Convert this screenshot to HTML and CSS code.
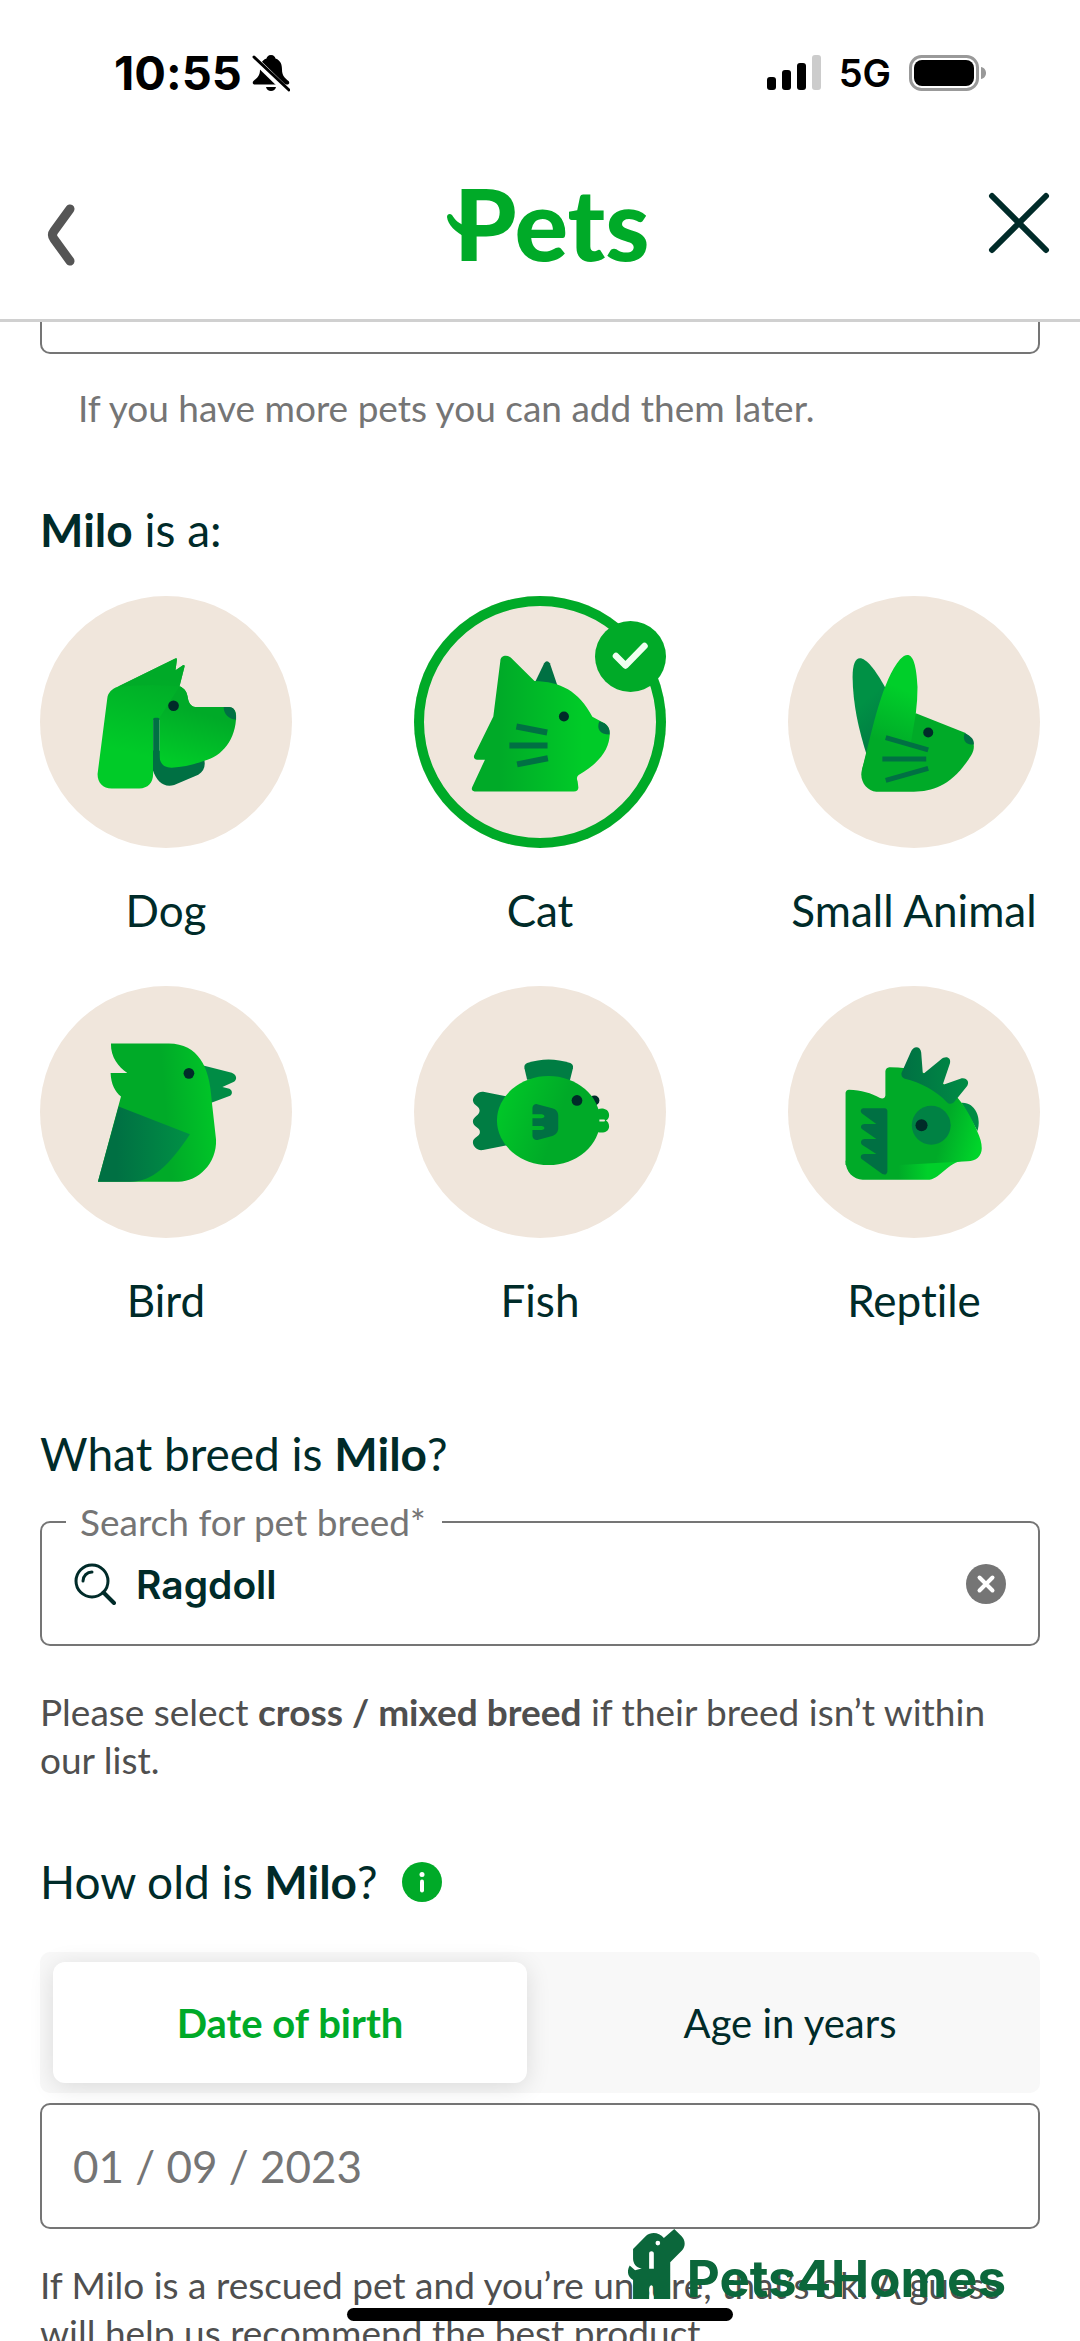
FILE: index.html
```html
<!DOCTYPE html>
<html lang="en">
<head>
<meta charset="utf-8">
<meta name="viewport" content="width=device-width, initial-scale=1">
<title>Pets – tell us about Milo</title>
<link rel="stylesheet" href="styles.css">
</head>
<body>
<div class="app">
  <div class="status">
    <div class="status-group">
      <span class="clock">10:55</span>
      <svg class="bell" viewBox="0 0 38 38" aria-hidden="true">
        <path d="M19 1c-3 0-4 2-4.500 3.500C9 6.500 8 11 8 15.500 8 22 5 24 1.500 27c-1.500 1.600-.7 3.500 1.500 3.500h32c2.200 0 3-1.900 1.500-3.500C33 24 30 22 30 15.500 30 11 29 6.500 23.500 4.500 23 3 22 1 19 1z"/>
        <path d="M14 33h10c-.6 2.600-2.500 4-5 4s-4.400-1.400-5-4z"/>
        <path d="M0 3l36 35" stroke="#fff" stroke-width="7"/>
        <path d="M2 3l35 33" stroke="#000" stroke-width="3" stroke-linecap="round"/>
      </svg>
    </div>
    <div class="status-group status-right">
      <svg class="signal" viewBox="0 0 54 36" aria-hidden="true">
        <rect x="0" y="22" width="9" height="13" rx="3"/>
        <rect x="15" y="15" width="9" height="20" rx="3"/>
        <rect x="30" y="8" width="9" height="27" rx="3"/>
        <rect x="45" y="0" width="9" height="35" rx="3" fill="#ccc"/>
      </svg>
      <span class="network">5G</span>
      <svg class="battery" viewBox="0 0 77 36" aria-hidden="true">
        <rect x="1.500" y="1.500" width="67" height="33" rx="11" fill="none" stroke="#999" stroke-width="3"/>
        <rect x="5" y="5" width="60" height="26" rx="8"/>
        <path d="M72 12c3 .5 5 3 5 6s-2 5.500-5 6z" fill="#999"/>
      </svg>
    </div>
  </div>

  <header class="header">
    <button class="icon-button back" type="button" aria-label="Back">
      <svg class="back-icon" viewBox="0 0 34 62"><path d="M26 5L10 27q-3 4 0 8l16 22" fill="none" stroke="#555" stroke-width="9" stroke-linecap="round" stroke-linejoin="round"/></svg>
    </button>
    <svg class="logo" viewBox="0 0 200 84" role="img" aria-label="Pets">
      <path d="M0 36c0-3 3-4 5-2 3 5 7 9 15 11v12C8 51 1 44 0 36z"/>
      <text class="logo-text" x="7" y="80">Pets</text>
    </svg>
    <button class="icon-button" type="button" aria-label="Close">
      <svg class="close-icon" viewBox="0 0 62 62"><path d="M4 4l54 54M58 4L4 58" fill="none" stroke="#002b29" stroke-width="6" stroke-linecap="round"/></svg>
    </button>
  </header>

  <main class="content">
    <div class="name-field"></div>
    <p class="hint">If you have more pets you can add them later.</p>

    <fieldset class="species">
      <legend class="question"><b>Milo</b> is a:</legend>
      <div class="species-grid">
        <label class="pet">
          <input class="pet-radio" type="radio" name="species">
          <span class="disc">
            <svg viewBox="30 18 753 753" aria-hidden="true">
              <defs>
                <linearGradient id="dog-a" x1="0.600" y1="0" x2="0.400" y2="1"><stop offset=".1" stop-color="#00aa28"/><stop offset=".75" stop-color="#00cb28"/></linearGradient>
                <linearGradient id="dog-b" gradientUnits="userSpaceOnUse" x1="520" y1="370" x2="470" y2="530"><stop offset="0" stop-color="#00aa28"/><stop offset="1" stop-color="#00cb28"/></linearGradient>
              </defs>
              <path d="M367 480h20c20 40 80 45 134 28 4 20-2 34-18 44l-72 31c-32 8-52-10-64-45z" fill="#007043"/>
              <path d="M262 289L434 205q6-3 5 4l-4 31 22-15q6-2 5 4l-15 59c15 6 23 18 25 36 3 17 12 26 28 26L387 388H368V550c0 26-16 43-41 43H244c-26 0-42-16-42-43l29-226c2-18 15-29 31-35z" fill="url(#dog-a)"/>
              <path d="M387 382l60-94c15 6 23 18 25 36 3 17 12 26 28 26h90c17 0 26 10 26 26 0 70-42 122-95 134-35 14-65 19-98 21-24 0-36-14-36-38z" fill="url(#dog-b)"/>
              <path d="M262 289L434 205q6-3 5 4l-4 31 22-15q6-2 5 4l-15 59q-80-8-185 1z" fill="#00aa28" opacity=".8"/>
              <rect x="368" y="382" width="19" height="160" rx="5" fill="#007043"/>
              <path d="M579 350h16c14 0 21 11 21 37-20 1-38-16-37-37z" fill="#007043"/>
              <circle cx="429" cy="346" r="16" fill="#002b29"/>
            </svg>
          </span>
          <span class="pet-name">Dog</span>
        </label>
        <label class="pet">
          <input class="pet-radio" type="radio" name="species" checked>
          <span class="disc">
            <svg viewBox="28 18 753 753" aria-hidden="true">
              <defs><linearGradient id="cat-a"><stop offset=".2" stop-color="#00aa28"/><stop offset=".8" stop-color="#00cb28"/></linearGradient></defs>
              <path d="M390 275l27-56q8-12 17 0l22 65q-32 20-66-9z" fill="#007043"/>
              <path d="M286 212c0-17 20-20 31-10l71 70c77 2 132 29 173 107l36 19c12 8 17 20 16 34-2 42-26 82-93 121-5 4-7 10-3 19l2 17c1 8-4 13-13 13H209c-8 0-10-7-7-13l38-82h-23c-8 0-12-7-9-13l57-116z" fill="url(#cat-a)"/>
              <path d="M582 392l15 6c12 8 17 19 15 34-30 0-39-20-30-40z" fill="#007043"/>
              <path d="M334 408l92 18M313 465h114M336 521l92-18" stroke="#007043" stroke-width="18" stroke-linejoin="round"/>
              <circle cx="476" cy="378" r="15" fill="#002b29"/>
            </svg>
            <svg class="badge" viewBox="0 0 71 71" aria-hidden="true"><circle cx="35.500" cy="35.500" r="35.500" fill="#00aa28"/><path d="M21 35l9.500 9.500L49.500 25" fill="none" stroke="#effff0" stroke-width="6.500" stroke-linecap="round" stroke-linejoin="round"/></svg>
          </span>
          <span class="pet-name">Cat</span>
        </label>
        <label class="pet">
          <input class="pet-radio" type="radio" name="species">
          <span class="disc">
            <svg viewBox="27 18 753 753" aria-hidden="true">
              <defs>
                <linearGradient id="ear-a" x1="0.600" y1="0" x2="0.400" y2="1"><stop offset=".25" stop-color="#00cf2a"/><stop offset=".75" stop-color="#00aa28"/></linearGradient>
                <linearGradient id="ear-b" x1="0" y1="0" x2="0.300" y2="1"><stop offset=".5" stop-color="#009145"/><stop offset="1" stop-color="#007d43"/></linearGradient>
              </defs>
              <path d="M262 492c-24-75-41-150-42-232 0-82 39-78 101 38z" fill="url(#ear-b)"/>
              <path d="M409 368l143 57c30 16 38 42 23 68-56 91-113 108-172 110H291c-30-2-52-34-43-66l20-70z" fill="#00aa28"/>
              <path d="M248 537c31-116 58-263 114-330 29-30 48-9 52 83q0 40-5 78l-20 120-80 60z" fill="url(#ear-a)"/>
              <path d="M555 427c22 11 29 22 27 35-26 1-34-16-27-35z" fill="#007043"/>
              <path d="M319 441l127 37M309 505h131M319 569l127-36" stroke="#007043" stroke-width="15"/>
              <circle cx="446" cy="426" r="15" fill="#002b29"/>
            </svg>
          </span>
          <span class="pet-name">Small Animal</span>
        </label>
        <label class="pet">
          <input class="pet-radio" type="radio" name="species">
          <span class="disc">
            <svg viewBox="30 18 753 753" aria-hidden="true">
              <defs>
                <linearGradient id="bird-a" x1="0" y1=".3" x2="1" y2=".2"><stop offset=".55" stop-color="#00aa28"/><stop offset="1" stop-color="#00c828"/></linearGradient>
                <linearGradient id="bird-b"><stop offset=".2" stop-color="#007043"/><stop offset="1" stop-color="#009145"/></linearGradient>
              </defs>
              <path d="M515 255l88 22c16 6 17 22 5 28l-33 15 21 5c9 4 11 18 0 22l-60 22z" fill="#008c45"/>
              <path d="M242 190h173c88 2 122 68 128 170l13 117c3 72-54 126-112 126H203l69-255c-17-13-30-36-31-70h50c-27-18-50-47-49-88z" fill="url(#bird-a)"/>
              <path d="M265 378l213 83c-62 93-112 142-178 142h-97z" fill="url(#bird-b)"/>
              <circle cx="475" cy="279" r="16" fill="#002b29"/>
            </svg>
          </span>
          <span class="pet-name">Bird</span>
        </label>
        <label class="pet">
          <input class="pet-radio" type="radio" name="species">
          <span class="disc">
            <svg viewBox="28 18 753 753" aria-hidden="true">
              <defs><linearGradient id="fish-a" x1="0" y1=".3" x2="1" y2=".6"><stop offset="0" stop-color="#00c828"/><stop offset=".6" stop-color="#00aa28"/></linearGradient></defs>
              <path d="M366 298l-8-34c-1-8 1-13 8-16 43-14 85-14 129 0 7 3 9 8 8 16l-9 36z" fill="#007d43"/>
              <path d="M310 349l-75-15c-15-2-31 14-31 26 2 17 20 15 20 31 0 14-20 18-20 32 0 17 21 16 21 31s-21 15-21 31c0 14 15 26 30 23l76-15z" fill="#007d43"/>
              <circle cx="567" cy="360" r="15" fill="#002b29"/>
              <path d="M578 386c14-5 33 0 33 18 0 9-5 14-10 16 5 2 10 8 10 17 0 17-18 22-35 17z" fill="#00aa28"/>
              <ellipse cx="430" cy="420" rx="154" ry="133" fill="url(#fish-a)"/>
              <path d="M582 417h15q4 3 0 6h-15z" fill="#f0e6dc"/>
              <path d="M382 382q2-12 14-11l45 12c12 3 18 11 18 23v37c0 11-7 20-18 23l-44 12q-13 1-15-11v-19h28q8-1 8-6t-8-6h-28v-23h28q8-1 8-6t-8-6h-28z" fill="#007043"/>
              <circle cx="515" cy="360" r="16" fill="#002b29"/>
            </svg>
          </span>
          <span class="pet-name">Fish</span>
        </label>
        <label class="pet">
          <input class="pet-radio" type="radio" name="species">
          <span class="disc">
            <svg viewBox="27 18 753 753" aria-hidden="true">
              <defs>
                <linearGradient id="rep-a" x1="0" y1=".5" x2="1" y2=".7"><stop offset=".72" stop-color="#00aa28"/><stop offset="1" stop-color="#00d52a"/></linearGradient>
                <linearGradient id="rep-b"><stop offset=".45" stop-color="#00aa28"/><stop offset=".7" stop-color="#00d02a"/></linearGradient>
                <linearGradient id="rep-c"><stop offset="0" stop-color="#007043"/><stop offset="1" stop-color="#008c45"/></linearGradient>
              </defs>
              <path d="M545 367c40-3 61 44 48 84z" fill="#008c45"/>
              <path d="M199 540h350c-45 7-62 48-99 57H250c-27-2-51-22-51-57z" fill="url(#rep-b)"/>
              <path d="M199 337q2-9 10-9c37 1 67 10 93 25q14 4 16-8v-72q1-10 12-12c129-1 211 68 262 190 9 19 14 36 14 52 0 23-17 39-42 39l-204 11H199z" fill="url(#rep-a)"/>
              <path d="M366 278l28-63c7-19 29-19 31 2l5 65 53-44c16-13 32-6 28 11l-22 65 53-19c18-6 31 10 18 25l-34 42c-5 8-17 11-24 3-32-34-80-59-126-70q-12-5-10-17z" fill="url(#rep-c)"/>
              <path d="M252 383h64q8 1 8 9v180q-2 13-15 8l-61-44c-7-7-3-16 7-16h36l-43-28c-6-7-2-17 8-17h35l-42-29c-8-7-3-16 7-16h35l-43-31c-7-8-3-15 4-16z" fill="#007043"/>
              <circle cx="455" cy="434" r="58" fill="#008244"/>
              <circle cx="426" cy="434" r="18" fill="#002b29"/>
            </svg>
          </span>
          <span class="pet-name">Reptile</span>
        </label>
      </div>
    </fieldset>

    <h2 class="question breed-title">What breed is <b>Milo</b>?</h2>
    <fieldset class="breed-field">
      <legend class="breed-legend"><label for="breed">Search for pet breed*</label></legend>
      <div class="breed-row">
        <svg class="search-icon" viewBox="0 0 42 42" aria-hidden="true"><g fill="none" stroke="#002b29" stroke-linecap="round"><circle cx="18" cy="18" r="16" stroke-width="3"/><path d="M29.500 29.500L40 40" stroke-width="4"/><path d="M9 18a9 9 0 0 1 9-9" stroke-width="3"/></g></svg>
        <input class="breed-input" id="breed" type="text" value="Ragdoll">
        <button class="clear" type="button" aria-label="Clear">
          <svg viewBox="0 0 40 40"><circle cx="20" cy="20" r="20" fill="#757575"/><path d="M13.500 13.500l13 13M26.500 13.500l-13 13" stroke="#fff" stroke-width="4" stroke-linecap="round"/></svg>
        </button>
      </div>
    </fieldset>
    <p class="note">Please select <b>cross / mixed breed</b> if their breed isn’t within our list.</p>

    <div class="age-title">
      <h2 class="question">How old is <b>Milo</b>?</h2>
      <button class="info" type="button" aria-label="More information">
        <svg viewBox="0 0 40 40"><circle cx="20" cy="20" r="20" fill="#00aa28"/><circle cx="20" cy="12.500" r="2.500" fill="#fff"/><path d="M20 19.500v9" stroke="#fff" stroke-width="4" stroke-linecap="round"/></svg>
      </button>
    </div>
    <div class="tabs">
      <button class="tab tab-active" type="button" aria-pressed="true">Date of birth</button>
      <button class="tab" type="button" aria-pressed="false">Age in years</button>
    </div>
    <input class="date-input" type="text" placeholder="01 / 09 / 2023" aria-label="Date of birth">
    <p class="note age-note">If Milo is a rescued pet and you’re unsure, that’s ok. A guess will help us recommend the best product.</p>
  </main>

  <div class="watermark">
    <svg class="watermark-icon" viewBox="84 58 170 209" aria-hidden="true">
      <path fill="#0b673b" fill-rule="evenodd" d="M99 118l39-40c14-12 38-12 53 7l31-27 22 22c12 13 12 30 1 42l-35 35v110h-49v-28c-1-17-14-17-14 0v28H99v-57c-17-8-19-28-10-43l16 14 20-5c-18-2-26-17-26-30zM147 131v46h14v-46c0-9-14-9-14 0zM180 100a7 7 0 1 0-14 0 7 7 0 0 0 14 0z"/>
    </svg>
    <span>Pets4Homes</span>
  </div>
  <div class="home-bar"></div>
</div>
</body>
</html>
```
FILE: styles.css
```css
* {
  box-sizing: border-box;
}

body {
  margin: 0;
  background: #fff;
  color: #002b29;
  font-family: Lato, "Open Sans", sans-serif;
  font-size: 37px;
  font-variant-ligatures: none;
  line-height: 48px;
}

button {
  border: 0;
  padding: 0;
  background: none;
  color: inherit;
  font: inherit;
}

svg {
  display: block;
}

h2,
p,
fieldset,
legend {
  margin: 0;
  padding: 0;
  border: 0;
  font-weight: 400;
}

.app {
  position: relative;
  display: flex;
  flex-direction: column;
  height: 100vh;
  overflow: hidden;
}

/* Phone status bar */
.status {
  display: flex;
  flex: none;
  justify-content: space-between;
  align-items: center;
  height: 146px;
  padding: 0 94px 0 114px;
  color: #000;
  font-family: Inter, sans-serif;
  font-weight: 700;
}

.status-group {
  display: flex;
  align-items: center;
  gap: 10px;
}

.status-right {
  gap: 18px;
}

.clock {
  font-size: 47px;
}

.network {
  font-size: 38px;
  font-weight: 600;
}

.bell {
  width: 38px;
  height: 38px;
}

.signal {
  width: 54px;
  height: 36px;
}

.battery {
  width: 77px;
  height: 36px;
}

/* Header */
.header {
  display: flex;
  flex: none;
  justify-content: space-between;
  align-items: center;
  height: 176px;
  padding: 0 30px 20px 44px;
  border-bottom: 3px solid #d0d0d0;
}

.icon-button {
  display: flex;
  justify-content: center;
  width: 62px;
}

.back {
  justify-content: flex-start;
}

.back-icon {
  width: 34px;
  height: 62px;
  margin-top: 24px;
}

.close-icon {
  width: 62px;
  height: 62px;
}

.logo {
  overflow: visible;
  width: 200px;
  height: 84px;
  fill: #00aa28;
}

.logo-text {
  font: 900 100px Lato, sans-serif;
}

/* Form */
.content {
  flex: 1;
  min-height: 0;
  overflow: hidden;
  padding: 0 40px;
}

.name-field {
  height: 32px;
  border: 2px solid #757575;
  border-top: 0;
  border-radius: 0 0 10px 10px;
}

.hint {
  padding: 30px 38px 0;
  color: #757575;
}

.question {
  font-size: 46px;
  line-height: 56px;
}

.species {
  margin-top: 70px;
}

/* Pet choices, three to a row */
.species-grid {
  display: grid;
  grid-template-columns: repeat(3, 252px);
  justify-content: space-between;
  row-gap: 50px;
  padding-top: 38px;
}

.pet {
  position: relative;
  display: flex;
  flex-direction: column;
  align-items: center;
  gap: 36px;
}

.pet-radio {
  position: absolute;
  opacity: 0;
}

.disc {
  position: relative;
  width: 252px;
  height: 252px;
  border-radius: 50%;
  background: #f0e6dc;
}

.pet-radio:checked + .disc {
  box-shadow: inset 0 0 0 10px #00aa28;
}

.badge {
  position: absolute;
  top: 25px;
  right: 0;
  width: 71px;
  height: 71px;
}

.pet-name {
  font-size: 44px;
  line-height: 52px;
  white-space: nowrap;
}

.breed-title {
  padding-top: 100px;
}

.breed-field {
  margin-top: 16px;
  height: 148px;
  padding: 0 32px;
  border: 2px solid #757575;
  border-radius: 10px;
}

.breed-legend {
  margin-left: -8px;
  padding: 0 16px 0 14px;
  color: #757575;
}

.breed-row {
  display: flex;
  align-items: center;
  gap: 20px;
  padding-top: 12px;
}

.search-icon {
  flex: none;
  width: 42px;
  height: 42px;
}

.breed-input {
  flex: 1;
  min-width: 0;
  height: 52px;
  padding: 0;
  border: 0;
  background: none;
  color: #002b29;
  font: 600 39px Inter, sans-serif;
}

.clear,
.info {
  flex: none;
  width: 40px;
  height: 40px;
}

.note {
  padding-top: 42px;
  color: #4f4f4f;
}

.age-title {
  display: flex;
  align-items: center;
  gap: 24px;
  padding-top: 70px;
}

.tabs {
  display: grid;
  grid-template-columns: 1fr 1fr;
  gap: 26px;
  margin-top: 42px;
  padding: 10px 13px;
  border-radius: 10px;
  background: #f8f8f8;
}

.tab {
  height: 121px;
  border-radius: 12px;
  font-size: 40px;
}

.tab-active {
  background: #fff;
  box-shadow: 0 4px 24px rgba(0, 0, 0, 0.120);
  color: #00aa28;
  font-weight: 700;
}

.date-input {
  display: block;
  width: 100%;
  height: 126px;
  margin-top: 10px;
  padding: 0 31px;
  border: 2px solid #757575;
  border-radius: 10px;
  background: #fff;
  font: 44px Lato, sans-serif;
}

.date-input::placeholder {
  color: #757575;
  opacity: 1;
}

.age-note {
  padding-top: 32px;
}

/* Overlays */
.watermark {
  position: absolute;
  right: 74px;
  bottom: 42px;
  display: flex;
  align-items: flex-end;
  gap: 2px;
  color: #0b673b;
  font: 700 51px/40px Inter, sans-serif;
}

.watermark-icon {
  width: 57px;
  height: 70px;
}

.home-bar {
  position: absolute;
  bottom: 20px;
  left: 50%;
  width: 386px;
  height: 13px;
  margin-left: -193px;
  border-radius: 7px;
  background: #000;
}
```
